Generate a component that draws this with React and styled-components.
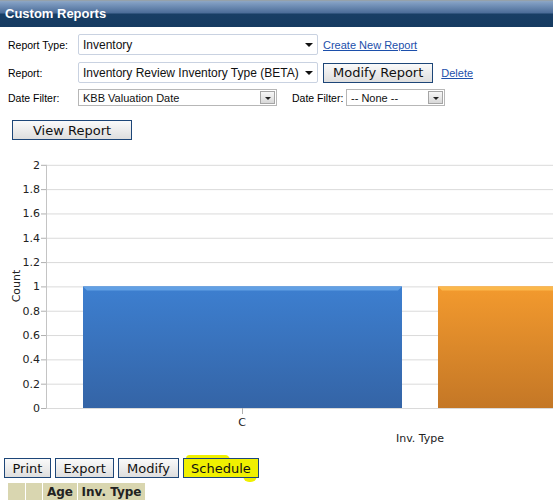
import styled, { createGlobalStyle } from "styled-components";

const GlobalStyle = createGlobalStyle`
    body {
        margin: 0;
        background: #fff;
        font-family: "Liberation Sans", Arial, sans-serif;
        color: #000;
    }
`;

const Page = styled.div`
    width: 553px;
    height: 500px;
    overflow: hidden;
`;

const Header = styled.div`
    height: 27px;
    background: linear-gradient(to bottom, #9c9c90 0, #8ea6c4 1px, #7f9cc1 3px, #4b6c98 13px, #183e65 14px, #163b61 27px);
    padding-left: 5px;
`;

const Title = styled.h1`
    margin: 0;
    font-family: "Liberation Sans", Arial, sans-serif;
    font-size: 13px;
    font-weight: bold;
    line-height: 27px;
    color: #fff;
`;

const Row = styled.div`
    display: flex;
    align-items: center;
    height: ${p => p.$h}px;
    margin-top: ${p => p.$mt}px;
    padding-left: 8px;
`;

const Label = styled.span`
    font-size: 10.5px;
    width: ${p => p.$w || 70}px;
    margin-left: ${p => p.$ml || 0}px;
    flex: none;
`;

const Select = styled.div`
    display: flex;
    align-items: center;
    box-sizing: border-box;
    width: ${p => p.$w}px;
    height: 100%;
    border: 1px solid #c9d2e1;
    border-radius: 2px;
    padding-left: 4px;
    font-size: 12px;
    color: #111;
`;

const SelectText = styled.span`
    flex: 1;
    white-space: nowrap;
    overflow: hidden;
`;

const Caret = styled.span`
    width: 0;
    height: 0;
    border-left: 4px solid transparent;
    border-right: 4px solid transparent;
    border-top: 4px solid #111;
    margin-right: 4px;
`;

const ClassicSelect = styled(Select)`
    border: 1px solid #b7b7b7;
    border-radius: 0;
    font-size: 11px;
    padding: 0 1px 0 4px;
`;

const ArrowBox = styled.span`
    display: flex;
    align-items: center;
    justify-content: center;
    box-sizing: border-box;
    width: 15px;
    height: 13px;
    border: 1px solid #a5a5a5;
    background: linear-gradient(#f7f7f7, #d8d8d8);
    &::after {
        content: "";
        border-left: 3px solid transparent;
        border-right: 3px solid transparent;
        border-top: 3px solid #222;
        margin-top: 1px;
    }
`;

const Link = styled.a`
    font-size: 11px;
    color: #1c4fab;
    text-decoration: underline;
    margin-left: ${p => p.$ml}px;
    cursor: pointer;
`;

const Button = styled.button`
    box-sizing: border-box;
    height: 20px;
    padding: 0 ${p => p.$px || 7.5}px;
    border: 1px solid #1d4678;
    background: ${p => (p.$highlight ? "#f0f000" : "linear-gradient(#fafafa, #dedede)")};
    font-family: "DejaVu Sans", Verdana, sans-serif;
    font-size: 13px;
    color: #111;
    line-height: 1;
    margin-left: ${p => p.$ml || 0}px;
    position: relative;
`;

const Highlight = styled(Button)`
    &::before {
        content: "";
        position: absolute;
        left: 2px;
        top: -4px;
        width: 44px;
        height: 6px;
        background: #f0f000;
        border-radius: 6px 8px 2px 2px;
        z-index: -1;
    }
    &::after {
        content: "";
        position: absolute;
        right: 1px;
        bottom: -5px;
        width: 14px;
        height: 8px;
        background: #f0f000;
        border-radius: 2px 2px 7px 7px;
        z-index: -1;
    }
`;

const ViewRow = styled.div`
    margin: 14px 0 0 12px;
`;

const Chart = styled.svg`
    display: block;
    margin-top: 10px;
    font-family: "DejaVu Sans", Verdana, sans-serif;
`;

const Actions = styled.div`
    display: flex;
    gap: 4px;
    margin: 8px 0 0 4px;
    position: relative;
    z-index: 0;
`;

const Grid = styled.table`
    margin: 5px 0 0 8px;
    border-collapse: collapse;
    font-family: "DejaVu Sans", Verdana, sans-serif;
    font-size: 12px;
    font-weight: bold;
`;

const Th = styled.th`
    width: ${p => p.$w}px;
    height: 18px;
    padding: 0;
    background: #d9d6b0;
    border-left: 1px solid #fff;
    color: #222;
    text-align: center;
    &:first-child { border-left: none; }
`;

const ticks = [0, 0.2, 0.4, 0.6, 0.8, 1, 1.2, 1.4, 1.6, 1.8, 2];
const yOf = v => 258 - v * 121.6;

const Bar = ({ x, w, id, light, top, bottom }) => {
    const y = yOf(1);
    const h = 258 - y;
    return (
        <g>
            <defs>
                <linearGradient id={id} x1="0" y1="0" x2="0" y2="1">
                    <stop offset="0" stopColor={top} />
                    <stop offset="1" stopColor={bottom} />
                </linearGradient>
            </defs>
            <rect x={x} y={y} width={w} height={h} fill={`url(#${id})`} />
            <polygon
                points={`${x},${y} ${x + w},${y} ${x + w - 4},${y + 4} ${x + 4},${y + 4}`}
                fill={light}
            />
        </g>
    );
};

export default function App() {
    return (
        <Page>
            <GlobalStyle />
            <Header>
                <Title>Custom Reports</Title>
            </Header>

            <Row $h={21} $mt={7}>
                <Label>Report Type:</Label>
                <Select $w={240}>
                    <SelectText>Inventory</SelectText>
                    <Caret />
                </Select>
                <Link $ml={5}>Create New Report</Link>
            </Row>

            <Row $h={21} $mt={7}>
                <Label>Report:</Label>
                <Select $w={240}>
                    <SelectText>Inventory Review Inventory Type (BETA)</SelectText>
                    <Caret />
                </Select>
                <Button $ml={5} $px={9}>Modify Report</Button>
                <Link $ml={8}>Delete</Link>
            </Row>

            <Row $h={17} $mt={6}>
                <Label>Date Filter:</Label>
                <ClassicSelect $w={199}>
                    <SelectText>KBB Valuation Date</SelectText>
                    <ArrowBox />
                </ClassicSelect>
                <Label $w={54} $ml={15}>Date Filter:</Label>
                <ClassicSelect $w={99}>
                    <SelectText>-- None --</SelectText>
                    <ArrowBox />
                </ClassicSelect>
            </Row>

            <ViewRow>
                <Button $px={20}>View Report</Button>
            </ViewRow>

            <Chart width="553" height="300" viewBox="0 0 553 300">
                {ticks.map(t => (
                    <g key={t}>
                        <line x1="46" x2="553" y1={yOf(t) + 0.5} y2={yOf(t) + 0.5} stroke="#dadada" />
                        <line x1="41" x2="46" y1={yOf(t) + 0.5} y2={yOf(t) + 0.5} stroke="#b0b0b0" />
                        <text x="40" y={yOf(t) + 4} fontSize="11" textAnchor="end" fill="#222">
                            {t === 0 || t === 1 || t === 2 ? t : t.toFixed(1)}
                        </text>
                    </g>
                ))}
                <line x1="46.5" x2="46.5" y1={yOf(2)} y2="258.5" stroke="#c4c4c4" />
                <Bar x={83} w={319} id="blueBar" light="#62a0e4" top="#3d7fd0" bottom="#3464a6" />
                <Bar x={438} w={120} id="orangeBar" light="#fbb84c" top="#f39a2e" bottom="#c47726" />
                <line x1="242.5" x2="242.5" y1="258" y2="264" stroke="#b0b0b0" />
                <text x="242" y="276" fontSize="11" textAnchor="middle" fill="#222">C</text>
                <text x="420" y="292" fontSize="11" textAnchor="middle" fill="#222">Inv. Type</text>
                <text x="20" y="136" fontSize="11" textAnchor="middle" fill="#222" transform="rotate(-90 20 136)">
                    Count
                </text>
            </Chart>

            <Actions>
                <Button>Print</Button>
                <Button>Export</Button>
                <Button>Modify</Button>
                <Highlight $highlight>Schedule</Highlight>
            </Actions>

            <Grid>
                <thead>
                    <tr>
                        <Th $w={17}></Th>
                        <Th $w={16}></Th>
                        <Th $w={34}>Age</Th>
                        <Th $w={67}>Inv. Type</Th>
                    </tr>
                </thead>
            </Grid>
        </Page>
    );
}
